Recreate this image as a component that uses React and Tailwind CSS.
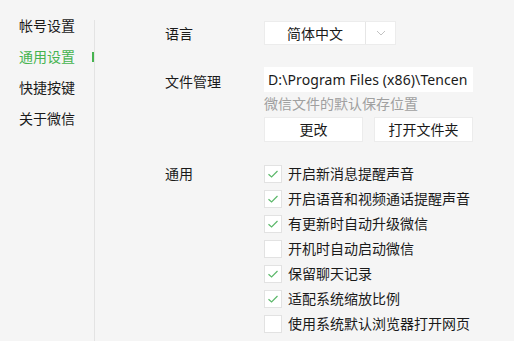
import React from 'react';

const font = { fontFamily: '"Noto Sans", "Noto Sans CJK SC", sans-serif' };

const options = [
  { label: '开启新消息提醒声音', on: true },
  { label: '开启语音和视频通话提醒声音', on: true },
  { label: '有更新时自动升级微信', on: true },
  { label: '开机时自动启动微信', on: false },
  { label: '保留聊天记录', on: true },
  { label: '适配系统缩放比例', on: true },
  { label: '使用系统默认浏览器打开网页', on: false },
];

const navItems = ['帐号设置', '通用设置', '快捷按键', '关于微信'];

const Check = ({ on }) => (
  <span className="w-[18px] h-[18px] bg-white border border-[#e2e2e2] flex items-center justify-center shrink-0">
    {on && (
      <svg width="12" height="10" viewBox="0 0 12 10">
        <path d="M1.5 5.2 L4.6 8 L10.5 2" fill="none" stroke="#5cb86a" strokeWidth="1.2" />
      </svg>
    )}
  </span>
);

const App = () => {
  return (
    <div className="w-[514px] h-[341px] bg-[#f5f5f5] flex text-[#1a1a1a] overflow-hidden" style={font}>
      {/* sidebar */}
      <div className="w-[95px] shrink-0 flex">
        <div className="flex-1 pt-[10px] flex flex-col">
          {navItems.map((item, i) => (
            <div key={item} className="h-[31px] flex items-center pl-[19px] relative">
              <span className={`text-[14px] ${i === 1 ? 'text-[#46b34f]' : 'text-[#1a1a1a]'}`}>{item}</span>
              {i === 1 && <span className="absolute right-0 top-[11px] w-[2px] h-[10px] bg-[#46b34f]" />}
            </div>
          ))}
        </div>
        <div className="mt-[20px] w-px bg-[#e3e3e3]" />
      </div>

      {/* content */}
      <div className="flex-1 pl-[70px] pt-[21px] text-[14px]">
        <div className="flex">
          <div className="w-[99px] h-[24px] flex items-center pt-[1px]">语言</div>
          <div className="w-[132px] h-[24px] bg-white border border-[#ececec] flex">
            <div className="w-[101px] flex items-center justify-center border-r border-[#e6e6e6]">简体中文</div>
            <div className="flex-1 flex items-center justify-center">
              <svg width="10" height="6" viewBox="0 0 10 6">
                <path d="M1 1 L5 5 L9 1" fill="none" stroke="#c2c2c2" strokeWidth="1" />
              </svg>
            </div>
          </div>
        </div>

        <div className="flex mt-[22px]">
          <div className="w-[99px] h-[25px] flex items-center pt-[4px]">文件管理</div>
          <div className="flex flex-col">
            <div className="w-[209px] h-[25px] bg-white flex items-center pl-[4px] whitespace-nowrap text-[14px] tracking-[0.1px]">
              D:\Program Files (x86)\Tencen
            </div>
            <div className="h-[25px] flex items-center text-[#a0a0a0] text-[14px] -mt-[1px]">微信文件的默认保存位置</div>
            <div className="flex gap-[11px] mt-[1px]">
              <button className="w-[99px] h-[25px] bg-white border border-[#ececec] flex items-center justify-center">更改</button>
              <button className="w-[99px] h-[25px] bg-white border border-[#ececec] flex items-center justify-center">打开文件夹</button>
            </div>
          </div>
        </div>

        <div className="flex mt-[19px]">
          <div className="w-[99px] h-[25px] flex items-center">通用</div>
          <div className="flex flex-col">
            {options.map((o) => (
              <div key={o.label} className="h-[25px] flex items-center gap-[6px]">
                <Check on={o.on} />
                <span className="text-[14px]">{o.label}</span>
              </div>
            ))}
          </div>
        </div>
      </div>
    </div>
  );
};

export default App;
